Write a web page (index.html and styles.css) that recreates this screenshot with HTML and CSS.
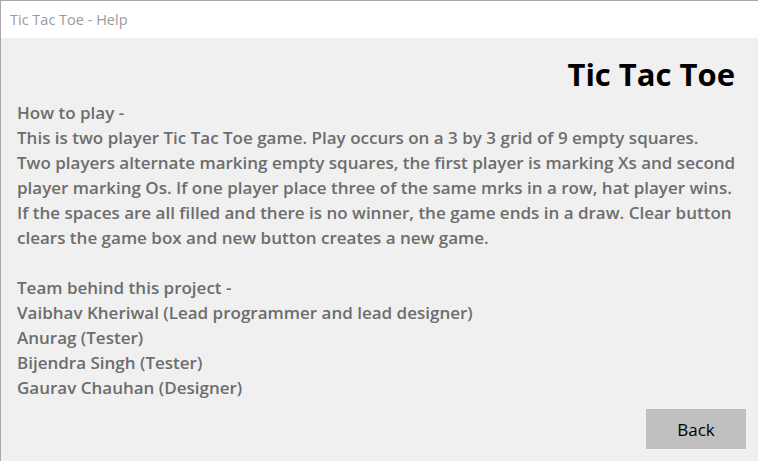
FILE: index.html
```html
<!DOCTYPE html>
<html>
<head>
<meta charset="utf-8">
<link rel="stylesheet" href="styles.css">
</head>
<body>
<div class="window">
  <div class="titlebar">Tic Tac Toe - Help</div>
  <div class="content">
    <h1 class="heading">Tic Tac Toe</h1>
    <div class="text">
      <p>How to play -<br>This is two player Tic Tac Toe game. Play occurs on a 3 by 3 grid of 9 empty squares.<br>Two players alternate marking empty squares, the first player is marking Xs and second<br>player marking Os. If one player place three of the same mrks in a row, hat player wins.<br>If the spaces are all filled and there is no winner, the game ends in a draw. Clear button<br>clears the game box and new button creates a new game.</p>
      <p>Team behind this project -<br>Vaibhav Kheriwal (Lead programmer and lead designer)<br>Anurag (Tester)<br>Bijendra Singh (Tester)<br>Gaurav Chauhan (Designer)</p>
    </div>
    <div class="actions"><button class="back">Back</button></div>
  </div>
</div>
</body>
</html>
```
FILE: styles.css
```css
html, body { margin: 0; padding: 0; }
body { width: 758px; height: 461px; overflow: hidden; font-family: "Open Sans", "Noto Sans", sans-serif; }
.window {
  box-sizing: border-box;
  width: 758px; height: 461px;
  border-top: 1px solid #a8a8a8;
  border-left: 1px solid #a8a8a8;
  display: flex; flex-direction: column;
  background: #f0f0f0;
}
.titlebar {
  height: 37px; background: #fff; color: #9a9a9a;
  font-size: 14.5px; line-height: 37px; padding-left: 9px;
  flex: none;
}
.content { flex: 1; display: flex; flex-direction: column; padding: 0 12px 0 16px; }
.heading {
  margin: 14px 0 0 0; text-align: right; font-size: 31px; font-weight: 700;
  line-height: 44px; color: #000; padding-right: 11px;
}
.text { color: #6d6d6d; font-size: 17px; font-weight: 600; line-height: 25px; margin-top: 4px; white-space: nowrap; }
.text p { margin: 0 0 25px 0; }
.text p:last-child { margin: 0; }
.actions { margin-top: auto; display: flex; justify-content: flex-end; padding-bottom: 12px; }
.back {
  width: 100px; height: 40px; border: none; background: #c0c0c0; color: #000;
  font-family: inherit; font-size: 17px; font-weight: 500; padding: 0;
}
```
